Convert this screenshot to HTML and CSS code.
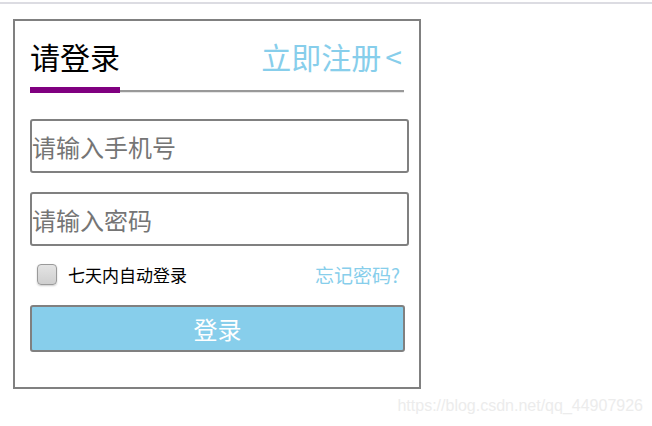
FILE: index.html
```html
<!DOCTYPE html>
<html lang="zh-CN">
<head>
  <meta charset="UTF-8">
  <meta name="viewport" content="width=device-width, initial-scale=1.0">
  <title>登录</title>

  <link rel="stylesheet" href="styles.css">

</head>

<body>
  <div class="topline"></div>

  <div class="login">
    <div class="login-head">
      <span class="title">请登录</span>
      <a class="register" href="#">立即注册<span class="arrow">&lt;</span></a>
    </div>

    <input class="field phone" type="text" placeholder="请输入手机号">
    <input class="field" type="password" placeholder="请输入密码">

    <div class="options">
      <label class="remember">
        <input type="checkbox" class="check">
        <span>七天内自动登录</span>
      </label>
      <a class="forgot" href="#">忘记密码?</a>
    </div>

    <button class="submit">登录</button>
  </div>

  <div class="watermark">https://blog.csdn.net/qq_44907926</div>
</body>
</html>
```

FILE: styles.css
```css
*, *::before, *::after {
  box-sizing: border-box;
}

body {
  margin: 0;
  background-color: #fff;
  font-family: "Noto Sans CJK SC", "Liberation Sans", sans-serif;
}

a {
  text-decoration: none;
}

.topline {
  margin-top: 2px;
  height: 2px;
  background-color: #dcdce2;
}

.login {
  margin: 15px 0 0 13px;
  width: 408px;
  padding: 15px 15px 35px;
  border: 2px solid #808080;
}

.login-head {
  display: flex;
  justify-content: space-between;
  align-items: flex-start;
  padding-top: 5px;
  border-bottom: 2px solid #999;
  box-shadow: 0 1px 0 #e6e6e6;
}

.title {
  font-size: 30px;
  line-height: 30px;
  color: #000;
  padding-bottom: 16px;
  border-bottom: 6px solid #800080;
  margin-bottom: -3px;
}

.register {
  font-size: 30px;
  line-height: 30px;
  color: #87ceeb;
  margin-right: 2px;
}

.register .arrow {
  margin-left: 4px;
}

.field {
  display: block;
  width: 379px;
  height: 54px;
  margin-top: 19px;
  padding: 0 2px 0 0;
  border: 2px solid #808080;
  border-radius: 3px;
  font-family: inherit;
  font-size: 24px;
  color: #333;
  outline: none;
}

.field::placeholder {
  color: #757575;
}

.phone {
  margin-top: 27px;
}

.options {
  display: flex;
  justify-content: space-between;
  align-items: center;
  height: 24px;
  margin-top: 16px;
}

.remember {
  display: flex;
  align-items: center;
  font-size: 17px;
  color: #000;
}

.check {
  appearance: none;
  margin: 0 11px 0 7px;
  width: 20px;
  height: 21px;
  border: 1px solid #9a9a9a;
  border-radius: 4px;
  background: linear-gradient(#e4e4e4, #cfcfcf);
  box-shadow: 0 1px 2px rgba(0, 0, 0, 0.2);
}

.forgot {
  font-size: 19px;
  color: #87ceeb;
  margin-right: 4px;
}

.submit {
  display: block;
  width: 375px;
  height: 47px;
  margin-top: 19px;
  border: 2px solid #808080;
  border-radius: 3px;
  background-color: #87ceeb;
  color: #fff;
  font-family: inherit;
  font-size: 24px;
  padding: 0;
}

.watermark {
  text-align: right;
  padding-right: 9px;
  margin-top: 8px;
  font-family: "Liberation Sans", sans-serif;
  font-size: 16px;
  color: #ececec;
}
```
